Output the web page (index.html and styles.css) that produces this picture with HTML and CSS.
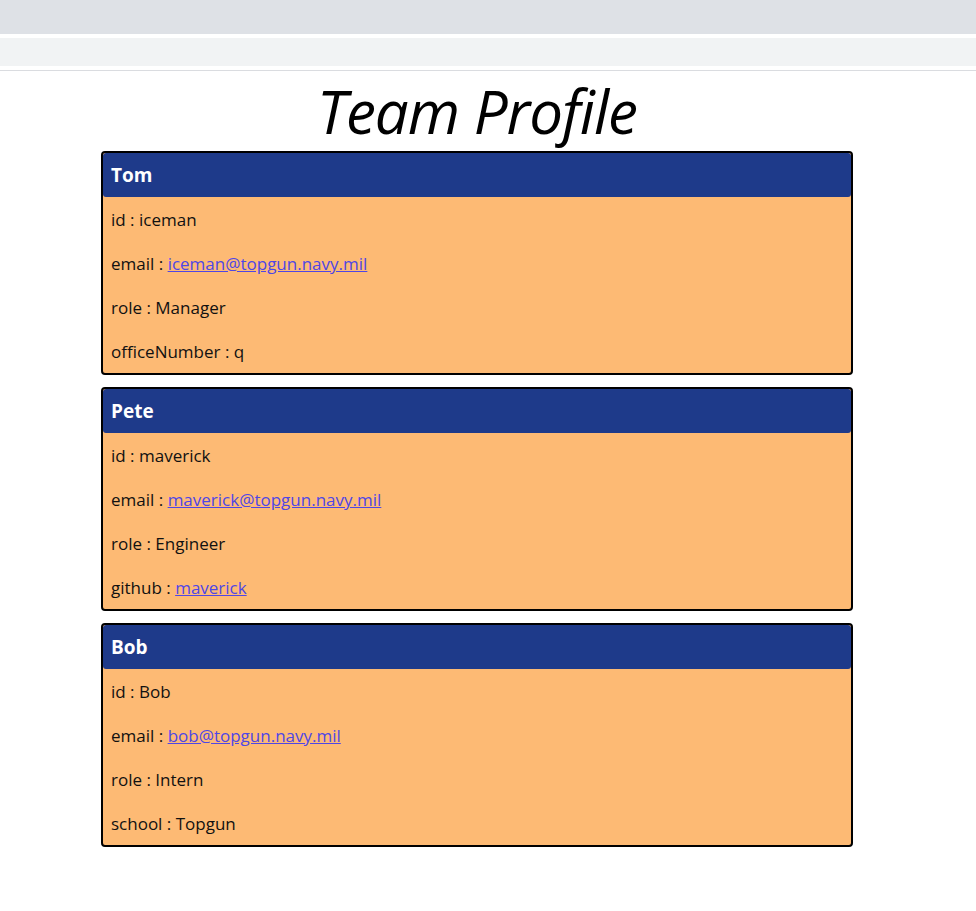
FILE: index.html
```html
<!DOCTYPE html>
<html lang="en">
<head>
<meta charset="utf-8">
<title>Team Profile</title>
<link rel="stylesheet" href="styles.css">
</head>
<body>
<div class="chrome">
  <div class="chrome-tabs"></div>
  <div class="chrome-bar"></div>
</div>
<main class="page">
  <div class="wrap">
    <h1 class="title">Team Profile</h1>
    <section class="cards">
      <div class="card">
        <div class="card-head">Tom</div>
        <div class="row">id : iceman</div>
        <div class="row">email : <a href="#">iceman@topgun.navy.mil</a></div>
        <div class="row">role : Manager</div>
        <div class="row">officeNumber : q</div>
      </div>
      <div class="card">
        <div class="card-head">Pete</div>
        <div class="row">id : maverick</div>
        <div class="row">email : <a href="#">maverick@topgun.navy.mil</a></div>
        <div class="row">role : Engineer</div>
        <div class="row">github : <a href="#">maverick</a></div>
      </div>
      <div class="card">
        <div class="card-head">Bob</div>
        <div class="row">id : Bob</div>
        <div class="row">email : <a href="#">bob@topgun.navy.mil</a></div>
        <div class="row">role : Intern</div>
        <div class="row">school : Topgun</div>
      </div>
    </section>
  </div>
</main>
</body>
</html>
```
FILE: styles.css
```css
html, body {
  margin: 0;
  padding: 0;
  background: #ffffff;
}
body {
  font-family: "Open Sans", "Liberation Sans", sans-serif;
  color: #111111;
}
.chrome {
  display: flex;
  flex-direction: column;
}
.chrome-tabs {
  height: 34px;
  background: #dee1e6;
  border-bottom: 4px solid #ffffff;
}
.chrome-bar {
  height: 28px;
  background: #f1f3f4;
  border-bottom: 4px solid #ffffff;
}
.page {
  border-top: 1px solid #dadce0;
  padding-left: 101px;
}
.wrap {
  width: 752px;
  display: flex;
  flex-direction: column;
}
.title {
  margin: 0;
  text-align: center;
  font-family: "Open Sans", sans-serif;
  font-style: italic;
  font-weight: 400;
  font-size: 60px;
  line-height: 80px;
  letter-spacing: -1px;
  color: #000;
}
.cards {
  display: flex;
  flex-direction: column;
  gap: 12px;
}
.card {
  border: 2px solid #000;
  border-radius: 4px;
  background: #fdba74;
  overflow: hidden;
}
.card-head {
  height: 44px;
  display: flex;
  align-items: center;
  padding-left: 8px;
  background: #1e3a8a;
  color: #fff;
  font-weight: 700;
  font-size: 19px;
  border-radius: 3px;
}
.row {
  height: 44px;
  display: flex;
  align-items: center;
  padding-left: 8px;
  font-size: 17px;
  white-space: pre;
}
.row a {
  color: #4f46e5;
  text-decoration: underline;
}
```
